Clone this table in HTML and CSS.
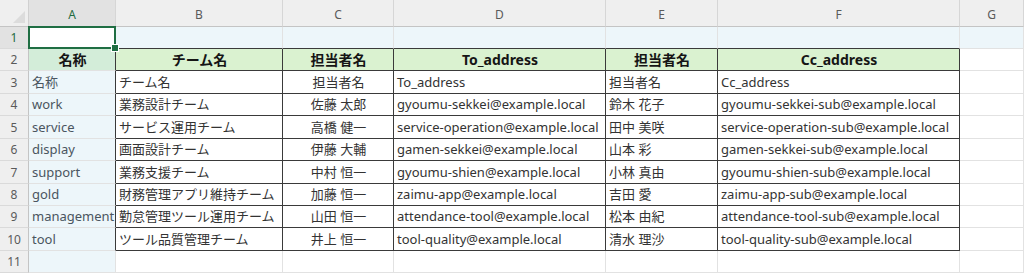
FILE: index.html
```html
<!DOCTYPE html>
<html lang="ja">
<head>
<meta charset="utf-8">
<link rel="stylesheet" href="styles.css">
</head>
<body>
<div class="sheet">
  <div class="corner"><span class="tri"></span></div>
  <div class="ch sel-h">A</div><div class="ch">B</div><div class="ch">C</div><div class="ch">D</div><div class="ch">E</div><div class="ch">F</div><div class="ch">G</div>

  <div class="rh sel-h">1</div>
  <div class="c fa active"><div class="sel"><span class="handle"></span></div></div>
  <div class="c fr tt"></div><div class="c fr tt"></div><div class="c fr tt"></div><div class="c fr tt"></div><div class="c fr tt"></div><div class="c fr"></div>

  <div class="rh">2</div>
  <div class="c ha tl ctr b">名称</div>
  <div class="c h t ctr b">チーム名</div>
  <div class="c h t ctr b">担当者名</div>
  <div class="c h t ctr b">To_address</div>
  <div class="c h t ctr b">担当者名</div>
  <div class="c h t ctr b">Cc_address</div>
  <div class="c"></div>

  <div class="rh">3</div>
  <div class="c fa tl">名称</div><div class="c t">チーム名</div><div class="c t ctr">担当者名</div><div class="c t">To_address</div><div class="c t">担当者名</div><div class="c t">Cc_address</div><div class="c"></div>

  <div class="rh">4</div>
  <div class="c fa tl">work</div><div class="c t">業務設計チーム</div><div class="c t ctr">佐藤 太郎</div><div class="c t">gyoumu-sekkei@example.local</div><div class="c t">鈴木 花子</div><div class="c t">gyoumu-sekkei-sub@example.local</div><div class="c"></div>

  <div class="rh">5</div>
  <div class="c fa tl">service</div><div class="c t">サービス運用チーム</div><div class="c t ctr">高橋 健一</div><div class="c t">service-operation@example.local</div><div class="c t">田中 美咲</div><div class="c t">service-operation-sub@example.local</div><div class="c"></div>

  <div class="rh">6</div>
  <div class="c fa tl">display</div><div class="c t">画面設計チーム</div><div class="c t ctr">伊藤 大輔</div><div class="c t">gamen-sekkei@example.local</div><div class="c t">山本 彩</div><div class="c t">gamen-sekkei-sub@example.local</div><div class="c"></div>

  <div class="rh">7</div>
  <div class="c fa tl">support</div><div class="c t">業務支援チーム</div><div class="c t ctr">中村 恒一</div><div class="c t">gyoumu-shien@example.local</div><div class="c t">小林 真由</div><div class="c t">gyoumu-shien-sub@example.local</div><div class="c"></div>

  <div class="rh">8</div>
  <div class="c fa tl">gold</div><div class="c t">財務管理アプリ維持チーム</div><div class="c t ctr">加藤 恒一</div><div class="c t">zaimu-app@example.local</div><div class="c t">吉田 愛</div><div class="c t">zaimu-app-sub@example.local</div><div class="c"></div>

  <div class="rh">9</div>
  <div class="c fa tl">management</div><div class="c t">勤怠管理ツール運用チーム</div><div class="c t ctr">山田 恒一</div><div class="c t">attendance-tool@example.local</div><div class="c t">松本 由紀</div><div class="c t">attendance-tool-sub@example.local</div><div class="c"></div>

  <div class="rh">10</div>
  <div class="c fa tl">tool</div><div class="c t">ツール品質管理チーム</div><div class="c t ctr">井上 恒一</div><div class="c t">tool-quality@example.local</div><div class="c t">清水 理沙</div><div class="c t">tool-quality-sub@example.local</div><div class="c"></div>

  <div class="rh">11</div>
  <div class="c fa"></div><div class="c"></div><div class="c"></div><div class="c"></div><div class="c"></div><div class="c"></div><div class="c"></div>
</div>
</body>
</html>
```
FILE: styles.css
```css
html, body {
  margin: 0;
  padding: 0;
  background: #ffffff;
}
body {
  font-family: "Noto Sans", "Noto Sans CJK JP", sans-serif;
  font-size: 13px;
  color: #333333;
  overflow: hidden;
}
.sheet {
  display: grid;
  grid-template-columns: 29px 87px 167px 111px 212px 112px 242px 64px;
  grid-template-rows: 27px 22px 22px 23px 22px 23px 22px 23px 22px 22px 23px 22px;
  width: 1024px;
}
.corner {
  position: relative;
  background: #efefef;
  border-right: 1px solid #d0d0d0;
  border-bottom: 1px solid #c4c4c4;
  box-sizing: border-box;
}
.tri {
  position: absolute;
  right: 3px;
  bottom: 3px;
  width: 0;
  height: 0;
  border-left: 12px solid transparent;
  border-bottom: 12px solid #dcdcdc;
}
.ch {
  background: #efefef;
  border-right: 1px solid #d6d6d6;
  border-bottom: 1px solid #c4c4c4;
  box-sizing: border-box;
  display: flex;
  align-items: center;
  justify-content: center;
  font-size: 12px;
  color: #5a5a5a;
  padding-top: 2px;
}
.rh {
  background: #efefef;
  border-right: 1px solid #c4c4c4;
  border-bottom: 1px solid #dadada;
  box-sizing: border-box;
  display: flex;
  align-items: center;
  justify-content: center;
  font-size: 12px;
  color: #5a5a5a;
}
.sel-h {
  background: #e2e2e2;
  color: #1f6b41;
}
.c {
  box-sizing: border-box;
  border-right: 1px solid #e2e2e2;
  border-bottom: 1px solid #e2e2e2;
  display: flex;
  align-items: center;
  padding: 0 2px 0 3px;
  white-space: nowrap;
  overflow: visible;
  line-height: 1;
}
.fa, .fr {
  background: #edf6fa;
}
.fa {
  color: #4a5560;
}
.h {
  background: #daf2d0;
}
.ha {
  background: #d3edd9;
}
.t {
  border-right-color: #3a3a3a;
  border-bottom-color: #3a3a3a;
}
.tt {
  border-bottom-color: #3a3a3a;
}
.tl {
  border-right-color: #3a3a3a;
}
.ctr {
  justify-content: center;
}
.b {
  font-weight: 700;
  font-size: 14px;
  color: #151515;
}
.active {
  position: relative;
  background: #ffffff;
}
.sel {
  position: absolute;
  left: -1px;
  top: -1px;
  right: -1px;
  bottom: -1px;
  border: 2px solid #1f6e43;
  z-index: 2;
}
.handle {
  position: absolute;
  right: -5px;
  bottom: -5px;
  width: 6px;
  height: 6px;
  background: #1f6e43;
  border: 1px solid #ffffff;
}
```
